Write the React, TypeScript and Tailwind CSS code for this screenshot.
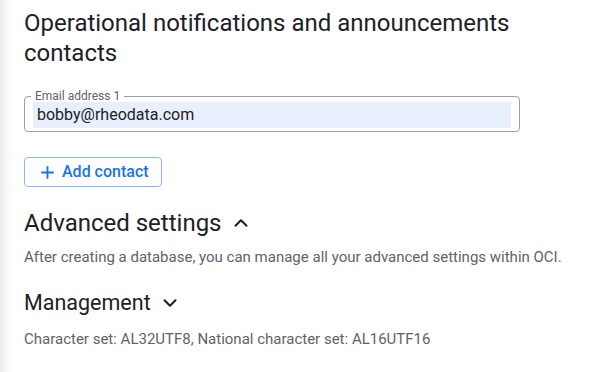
import { Plus, ChevronUp, ChevronDown } from 'lucide-react'

export default function App() {
  return (
    <div className="h-[372px] w-[600px] overflow-hidden bg-[linear-gradient(to_right,#e9e9e9,#fafafa_8px,#ffffff_16px)] font-['Roboto',sans-serif] text-[#202124]">
      <main className="px-6 pt-[8px]">
        <h1 className="text-[24px] leading-[30px] font-normal">
          Operational notifications and announcements contacts
        </h1>

        <fieldset className="mt-[22px] w-[496px] h-[42px] rounded-[4px] border border-[#9aa0a6] px-[8px] pb-[5px]">
          <legend className="ml-[-2px] px-[4px] text-[12px] leading-[12px] text-[#5f6368]">Email address 1</legend>
          <div className="h-[26px] bg-[#e8f0fe] pl-[4px] text-[16px] leading-[26px] text-[#202124]">bobby@rheodata.com</div>
        </fieldset>

        <button className="mt-[25px] flex h-[30px] w-[138px] items-center gap-[5px] rounded-[4px] border border-[#8ab4f8] pl-[13px] text-[16px] font-medium text-[#1a73e8]">
          <Plus size={19} strokeWidth={2.4} />
          Add contact
        </button>

        <div className="mt-[21px] flex items-center gap-[8px]">
          <h2 className="text-[24px] leading-[30px] font-normal">Advanced settings</h2>
          <ChevronUp size={22} strokeWidth={2.3} />
        </div>
        <p className="mt-[9px] text-[15px] leading-[20px] text-[#5f6368]">
          After creating a database, you can manage all your advanced settings within OCI.
        </p>

        <div className="mt-[22px] flex items-center gap-[8px]">
          <h2 className="text-[21.5px] leading-[28px] font-normal">Management</h2>
          <ChevronDown size={22} strokeWidth={2.3} />
        </div>
        <p className="mt-[13px] text-[15px] leading-[18px] text-[#5f6368]">
          Character set: AL32UTF8, National character set: AL16UTF16
        </p>
      </main>
    </div>
  )
}
